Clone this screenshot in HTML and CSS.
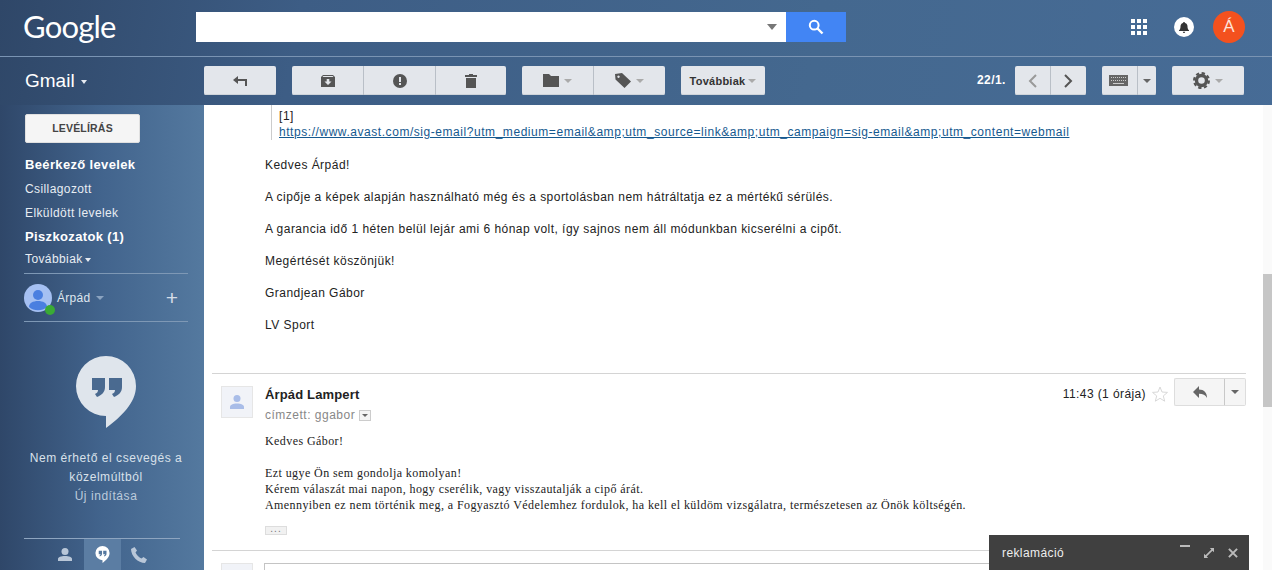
FILE: index.html
```html
<!DOCTYPE html>
<html lang="hu">
<head>
<meta charset="utf-8">
<title>Gmail</title>
<link rel="stylesheet" href="styles.css">
</head>
<body>
<div class="app">
  <header class="header">
    <div class="top">
      <div class="logo">Google</div>
      <div class="search">
        <div class="search-input"><span class="caret caret-search"></span></div>
        <button class="search-btn"><svg width="16" height="16" viewBox="0 0 16 16"><circle cx="6.200" cy="6.200" r="4.400" fill="none" stroke="#fff" stroke-width="2"/><path d="M9.500 9.500l5 5" stroke="#fff" stroke-width="2.400"/></svg></button>
      </div>
      <div class="top-right">
        <svg class="apps" width="16" height="16" viewBox="0 0 16 16" fill="#fff"><rect width="4" height="4"/><rect x="6" width="4" height="4"/><rect x="12" width="4" height="4"/><rect y="6" width="4" height="4"/><rect x="6" y="6" width="4" height="4"/><rect x="12" y="6" width="4" height="4"/><rect y="12" width="4" height="4"/><rect x="6" y="12" width="4" height="4"/><rect x="12" y="12" width="4" height="4"/></svg>
        <div class="bell"><svg width="10" height="11" viewBox="0 0 10 11" fill="#333"><path d="M5 0a1 1 0 0 1 1 1c2 .5 2.500 2 2.500 3.500 0 2 .5 3 1.500 3.800V9H0v-.7C1 7.500 1.500 6.500 1.500 4.500 1.500 3 2 1.500 4 1a1 1 0 0 1 1-1zM3.800 9.700h2.400A1.200 1.200 0 0 1 3.800 9.700z"/></svg></div>
        <div class="account">Á</div>
      </div>
    </div>
    <div class="bar">
      <div class="brand">Gmail <span class="caret caret-white"></span></div>
      <div class="tools">
        <button class="btn w72"><svg width="14" height="10" viewBox="0 0 14 10" fill="#555"><path d="M5 0v3h9v7h-2V5H5v3L0 4z"/></svg></button>
        <div class="group">
          <button class="btn w71"><svg width="14" height="12" viewBox="0 0 14 12" fill="#555"><path d="M2 0h10l2 2v10H0V2zM1.500 2h11l-.8-1H2.300zM7 10l3.500-3.500H8.300V4H5.700v2.500H3.500z" fill-rule="evenodd"/></svg></button>
          <button class="btn w72"><svg width="14" height="14" viewBox="0 0 14 14"><circle cx="7" cy="7" r="7" fill="#555"/><rect x="6" y="3" width="2" height="5" fill="#e4e7ec"/><rect x="6" y="9" width="2" height="2" fill="#e4e7ec"/></svg></button>
          <button class="btn w71"><svg width="12" height="14" viewBox="0 0 12 14" fill="#555"><path d="M4 0h4v1h4v2H0V1h4zM1 4h10v10H1z"/></svg></button>
        </div>
        <div class="group">
          <button class="btn w71"><svg width="16" height="13" viewBox="0 0 16 13" fill="#555"><path d="M0 0h6l2 2h8v11H0z"/></svg><span class="caret caret-gray"></span></button>
          <button class="btn w72"><svg width="16" height="15" viewBox="0 0 16 15" fill="#555"><path fill-rule="evenodd" d="M0 1l7-1 9 8.500L9.500 15 .5 6.500zM3.500 2.500a1.200 1.200 0 1 0 .01 0z"/></svg><span class="caret caret-gray"></span></button>
        </div>
        <button class="btn more">Továbbiak <span class="caret caret-gray"></span></button>
        <div class="pager">22/1.</div>
        <div class="group">
          <button class="btn w35"><svg width="9" height="14" viewBox="0 0 9 14" fill="none" stroke="#999" stroke-width="2"><path d="M8 1L2 7l6 6"/></svg></button>
          <button class="btn w36"><svg width="9" height="14" viewBox="0 0 9 14" fill="none" stroke="#555" stroke-width="2"><path d="M1 1l6 6-6 6"/></svg></button>
        </div>
        <div class="group kb">
          <button class="btn w35 kb-main"><svg width="19" height="11" viewBox="0 0 19 11"><rect width="19" height="11" fill="#666"/><path d="M2 2.500h15M2 5.500h15" stroke="#ccc" stroke-dasharray="1 1"/><rect x="4" y="8" width="11" height="1" fill="#ccc"/></svg></button>
          <button class="btn w19"><span class="caret caret-dark"></span></button>
        </div>
        <button class="btn w72 gear"><svg width="17" height="17" viewBox="0 0 17 17"><circle cx="8.500" cy="8.500" r="5" fill="none" stroke="#555" stroke-width="3.400"/><circle cx="8.500" cy="8.500" r="7.400" fill="none" stroke="#555" stroke-width="2.200" stroke-dasharray="3.300 2.500"/></svg><span class="caret caret-gray"></span></button>
      </div>
    </div>
  </header>
  <div class="content">
    <aside class="sidebar">
      <button class="compose">LEVÉLÍRÁS</button>
      <nav class="labels">
        <a class="label bold">Beérkező levelek</a>
        <a class="label">Csillagozott</a>
        <a class="label">Elküldött levelek</a>
        <a class="label bold">Piszkozatok (1)</a>
        <a class="label short">Továbbiak <span class="caret caret-white small"></span></a>
      </nav>
      <div class="user">
        <div class="user-pic">
          <svg width="28" height="28" viewBox="0 0 28 28"><circle cx="14" cy="14" r="14" fill="#a5c0f2"/><circle cx="14" cy="11" r="5" fill="#4a7fe0"/><path d="M5 23c0-4 4-6 9-6s9 2 9 6a14 14 0 0 1-18 0z" fill="#4a7fe0"/></svg>
          <span class="presence"></span>
        </div>
        <span class="user-name">Árpád</span><span class="caret caret-dim"></span>
        <span class="plus">+</span>
      </div>
      <div class="hangouts">
        <svg class="bubble" width="60" height="72" viewBox="0 0 60 72"><path d="M30 0a30 30 0 0 1 30 30c0 17-15 31-30 42V60A30 30 0 0 1 30 0z" fill="#dfe5ec"/><path d="M16 22h13v9c0 5-3 8-8 10l-2-3c2-1 3-2 3-4h-6zM33 22h13v9c0 5-3 8-8 10l-2-3c2-1 3-2 3-4h-6z" fill="#4a6a90"/></svg>
        <p class="hangouts-text">Nem érhető el csevegés a közelmúltból</p>
        <p class="hangouts-link">Új indítása</p>
      </div>
      <div class="chat-tabs">
        <div class="chat-tab"><svg width="14" height="13" viewBox="0 0 14 13" fill="#b9c7d8"><circle cx="7" cy="3.500" r="3.500"/><path d="M0 13v-2c0-2 3-3 7-3s7 1 7 3v2z"/></svg></div>
        <div class="chat-tab active"><svg width="15" height="17" viewBox="0 0 60 72"><path d="M30 0a30 30 0 0 1 30 30c0 17-15 31-30 42V60A30 30 0 0 1 30 0z" fill="#fff"/><path d="M14 20h14v13c0 7-4 10-10 11v-5c3-.5 4-2 4-4h-8zM33 20h14v13c0 7-4 10-10 11v-5c3-.5 4-2 4-4h-8z" fill="#55789f"/></svg></div>
        <div class="chat-tab"><svg width="16" height="16" viewBox="0 0 16 16" fill="#b9c7d8"><path d="M3.500 0L6 3.500 4.500 5.500C5.500 8 8 10.500 10.500 11.500L12.500 10 16 12.500 14 16C7 16 0 9 0 2z"/></svg></div>
      </div>
    </aside>
    <main class="main">
      <div class="thread">
        <blockquote class="quote">[1]<br><a class="link">https://www.avast.com/sig-email?utm_medium=email&amp;amp;utm_source=link&amp;amp;utm_campaign=sig-email&amp;amp;utm_content=webmail</a></blockquote>
        <div class="body-sans">
          <p>Kedves Árpád!</p>
          <p>A cipője a képek alapján használható még és a sportolásban nem hátráltatja ez a mértékű sérülés.</p>
          <p>A garancia idő 1 héten belül lejár ami 6 hónap volt, így sajnos nem áll módunkban kicserélni a cipőt.</p>
          <p>Megértését köszönjük!</p>
          <p>Grandjean Gábor</p>
          <p>LV Sport</p>
        </div>
        <article class="message">
          <div class="msg-avatar"><svg width="14" height="14" viewBox="0 0 14 14" fill="#a9bde8"><circle cx="7" cy="3.500" r="3.500"/><path d="M0 14v-2c0-2 3-3.500 7-3.500s7 1.500 7 3.500v2z"/></svg></div>
          <div class="msg-main">
            <div class="msg-head">
              <div class="msg-from">
                <div class="sender">Árpád Lampert</div>
                <div class="to">címzett: ggabor <span class="to-toggle"><span class="caret caret-tiny"></span></span></div>
              </div>
              <div class="msg-meta">
                <span class="time">11:43 (1 órája)</span>
                <svg class="star" width="16" height="16" viewBox="0 0 16 16"><path d="M8 1l2 5 5.500.4-4.200 3.500 1.400 5.300L8 12.300l-4.700 2.900 1.400-5.300L.5 6.400 6 6z" fill="none" stroke="#d8d8d8"/></svg>
                <div class="reply-group">
                  <button class="rbtn rbtn-main"><svg width="14" height="12" viewBox="0 0 14 12" fill="#666"><path d="M6 0v3.500c5 0 8 3 8 8.500-1.500-3-4-4.200-8-4.200V12L0 6z"/></svg></button>
                  <button class="rbtn rbtn-more"><span class="caret caret-dark"></span></button>
                </div>
              </div>
            </div>
            <div class="body-serif">
              <p>Kedves Gábor!</p>
              <p class="gap">Ezt ugye Ön sem gondolja komolyan!<br>Kérem válaszát mai napon, hogy cserélik, vagy visszautalják a cipő árát.<br>Amennyiben ez nem történik meg, a Fogyasztó Védelemhez fordulok, ha kell el küldöm vizsgálatra, természetesen az Önök költségén.</p>
            </div>
            <div class="ellipsis">...</div>
          </div>
        </article>
        <div class="reply-row">
          <div class="reply-avatar"></div>
          <div class="reply-box"></div>
        </div>
      </div>
      <div class="scrollbar"><div class="thumb"></div></div>
      <div class="compose-dock">
        <span class="dock-title">reklamáció</span>
        <span class="dock-icons">
          <svg class="dock-min" width="10" height="10" viewBox="0 0 10 10"><rect width="10" height="2" fill="#bbb"/></svg>
          <svg width="10" height="10" viewBox="0 0 12 12" fill="#bbb"><path d="M7 0h5v5l-1.800-1.800L3.200 10.200 5 12H0V7l1.800 1.800 7-7z"/></svg>
          <svg width="10" height="10" viewBox="0 0 11 11"><path d="M1 1l9 9M10 1l-9 9" stroke="#bbb" stroke-width="2.200"/></svg>
        </span>
      </div>
    </main>
  </div>
</div>
</body>
</html>
```
FILE: styles.css
```css
* { box-sizing: border-box; }
html, body { margin: 0; height: 100%; overflow: hidden; }
body { font-family: "Liberation Sans", Arial, sans-serif; font-size: 13px; color: #222; }
p { margin: 0; }
button { font-family: inherit; padding: 0; }
.app { height: 570px; display: flex; flex-direction: column; background: linear-gradient(100deg, #2f4768 0, #3d5d85 22%, #44688f 60%, #476c97 100%); }

.header { height: 105px; flex: none; }
.top { height: 57px; display: flex; align-items: flex-start; border-bottom: 1px solid #7a94b3; }
.logo { width: 196px; padding: 6px 0 0 23px; font-family: Lato, sans-serif; font-size: 31px; line-height: 40px; letter-spacing: -.8px; color: #fff; }
.search { display: flex; margin-top: 12px; }
.search-input { width: 590px; height: 30px; background: #fff; display: flex; align-items: center; justify-content: flex-end; padding-right: 9px; }
.search-btn { width: 60px; height: 30px; border: 0; background: #4285f4; display: flex; align-items: center; justify-content: center; }
.top-right { margin-left: auto; padding: 11px 27px 0 0; display: flex; align-items: center; }
.apps { margin-right: 27px; }
.bell { width: 20px; height: 20px; border-radius: 50%; background: #fff; display: flex; align-items: center; justify-content: center; margin-right: 19px; }
.account { width: 32px; height: 32px; border-radius: 50%; background: #f4511e; color: #fde3d9; font-size: 17px; display: flex; align-items: center; justify-content: center; }

.bar { height: 48px; display: flex; align-items: flex-start; }
.brand { width: 204px; padding: 13px 0 0 25px; font-size: 19px; line-height: 22px; color: #fff; }
.tools { flex: 1; display: flex; padding-top: 9px; }
.tools > * + * { margin-left: 16px; }
.group { display: flex; }
.btn { height: 29px; border: 0; border-radius: 2px; background: #e3e6eb; display: flex; align-items: center; justify-content: center; gap: 5px; box-shadow: inset 0 -1px 0 #cfd4da; }
.group .btn { border-radius: 0; }
.group .btn + .btn { border-left: 1px solid #b9bfc7; }
.group .btn:first-child { border-radius: 2px 0 0 2px; }
.group .btn:last-child { border-radius: 0 2px 2px 0; }
.w72 { width: 72px; }
.w71 { width: 71px; }
.w35 { width: 35px; }
.w36 { width: 36px; }
.w19 { width: 19px; }
.kb-main { padding-right: 2px; }
.more { width: 84px; font-size: 11px; font-weight: bold; letter-spacing: .25px; color: #333; gap: 3px; }
.tools > .pager { margin-left: 212px; width: 38px; color: #fff; font-size: 12px; font-weight: bold; letter-spacing: .4px; line-height: 29px; }
.tools > .pager + .group { margin-left: 0; }

.caret { display: inline-block; width: 0; height: 0; border-left: 4px solid transparent; border-right: 4px solid transparent; border-top: 4px solid #999; vertical-align: middle; }
.caret-search { border-left-width: 5.500px; border-right-width: 5.500px; border-top: 6px solid #777; }
.caret-white { border-left-width: 3.500px; border-right-width: 3.500px; border-top-color: #e6ebf2; margin-left: 1px; }
.caret-white.small { border-left-width: 3.500px; border-right-width: 3.500px; border-top-width: 4px; margin-left: -1px; }
.caret-gray { border-top-color: #aaa; }
.caret-dark { border-top-color: #666; }
.caret-dim { border-top-color: #8ba3c0; margin-left: 5px; }
.caret-tiny { border-left-width: 3px; border-right-width: 3px; border-top: 3px solid #666; display: block; }

.content { flex: 1; min-height: 0; display: flex; }
.sidebar { width: 204px; flex: none; background: linear-gradient(90deg, #2f4769 0, #42648d 50%, #54799f 100%); color: #fff; padding: 9px 16px 0 24px; display: flex; flex-direction: column; height: 465px; }
.compose { width: 115px; height: 29px; margin-left: 1px; padding-bottom: 2px; border: 1px solid #e0e0e0; border-radius: 2px; background: #f5f5f5; font-size: 10.500px; font-weight: bold; letter-spacing: .2px; color: #444; }
.labels { margin-top: 10px; height: 121px; border-bottom: 1px solid #7e98b5; display: flex; flex-direction: column; padding-left: 1px; }
.label { height: 24px; line-height: 24px; font-size: 12px; letter-spacing: .4px; color: #e8edf3; }
.label.bold { font-weight: bold; font-size: 13px; letter-spacing: .35px; color: #fff; }
.label.short { height: 20px; line-height: 20px; }
.user { height: 48px; border-bottom: 1px solid #7e98b5; display: flex; align-items: center; position: relative; }
.user-pic { width: 28px; height: 28px; position: relative; margin-right: 5px; }
.user-pic svg { display: block; }
.presence { position: absolute; right: -3px; bottom: -3px; width: 10px; height: 10px; border-radius: 50%; background: #3aaa35; }
.user-name { font-size: 12px; letter-spacing: .3px; color: #dfe6ee; }
.plus { margin-left: auto; margin-right: 10px; font-size: 21px; line-height: 20px; font-weight: 300; color: #d5dde7; }
.hangouts { text-align: center; margin-top: 34px; height: 182px; width: 164px; color: #d9e1ea; font-size: 12px; line-height: 19px; letter-spacing: .55px; }
.bubble { display: block; margin: 0 auto 21px; }
.hangouts-link { color: #bccbdc; }
.chat-tabs { height: 32px; width: 156px; border-top: 1px solid #8ea5c0; display: flex; padding-left: 23px; }
.chat-tab { width: 37px; display: flex; align-items: center; justify-content: center; padding-right: 2px; }
.chat-tab.active { background: #5b7da3; padding-right: 0; }

.main { flex: 1; min-width: 0; background: #fff; display: flex; position: relative; overflow: hidden; }
.thread { flex: 1; min-width: 0; padding: 0 17px 0 8px; overflow: hidden; }
.quote { margin: 0 0 0 59px; padding: 3px 0 0 7px; height: 35px; border-left: 1px solid #ccc; font-size: 12px; line-height: 16px; letter-spacing: .55px; color: #222; white-space: nowrap; }
.link { color: #15598f; text-decoration: underline; }
.body-sans { margin: 17px 0 0 53px; height: 216px; font-size: 12px; line-height: 16px; letter-spacing: .47px; color: #222; }
.body-sans p { margin-bottom: 16px; }
.message { border-top: 1px solid #d4d4d4; border-bottom: 1px solid #d4d4d4; height: 178px; display: flex; padding: 12px 0 0 9px; }
.msg-avatar { width: 32px; height: 32px; background: #f1f3f8; border: 1px solid #e6e6e6; display: flex; align-items: center; justify-content: center; flex: none; }
.msg-main { flex: 1; margin-left: 12px; min-width: 0; }
.msg-head { display: flex; justify-content: space-between; height: 38px; margin-top: -5px; }
.msg-from { padding-top: 6px; }
.sender { font-size: 13px; line-height: 16px; font-weight: bold; letter-spacing: .15px; color: #222; }
.to { font-size: 12px; line-height: 16px; margin-top: 4px; letter-spacing: .5px; color: #888; display: flex; align-items: center; gap: 4px; }
.to-toggle { width: 12px; height: 11px; border: 1px solid #ccc; background: #f4f4f4; display: flex; align-items: center; justify-content: center; }
.msg-meta { display: flex; align-items: flex-start; }
.time { font-size: 12px; line-height: 16px; letter-spacing: .4px; margin-top: 5px; color: #222; }
.star { margin: 5px 6px 0 6px; }
.reply-group { display: flex; margin-top: -3px; }
.rbtn { height: 28px; background: #f5f5f5; border: 1px solid #ddd; display: flex; align-items: center; justify-content: center; }
.rbtn-main { width: 50px; border-radius: 2px 0 0 2px; border-right: 0; }
.rbtn-more { width: 22px; border-radius: 0 2px 2px 0; border-left-color: #c8c8c8; }
.body-serif { font-family: "Liberation Serif", serif; font-size: 12px; line-height: 16px; letter-spacing: .42px; color: #222; margin-top: 14px; white-space: nowrap; }
.gap { margin-top: 16px; }
.ellipsis { width: 22px; height: 9px; margin-top: 13px; border: 1px solid #ddd; background: #f1f1f1; color: #777; font-size: 10px; line-height: 3px; text-align: center; letter-spacing: 1px; }
.reply-row { display: flex; margin: 12px 0 0 9px; }
.reply-avatar { width: 32px; height: 32px; background: #f1f3f8; border: 1px solid #e6e6e6; }
.reply-box { flex: 1; margin-left: 11px; height: 40px; border: 1px solid #c4c4c4; }
.scrollbar { width: 9px; flex: none; background: #fafafa; position: relative; }
.thumb { position: absolute; top: 169px; left: 0; width: 100%; height: 133px; background: #c6c6c6; }
.compose-dock { position: absolute; left: 785px; bottom: 0; width: 260px; height: 35px; background: #404040; color: #eee; display: flex; align-items: center; justify-content: space-between; padding: 0 11px 0 13px; }
.dock-title { font-size: 12px; letter-spacing: .4px; }
.dock-icons { display: flex; align-items: center; gap: 14px; }
.dock-min { margin-top: -6px; }
```
